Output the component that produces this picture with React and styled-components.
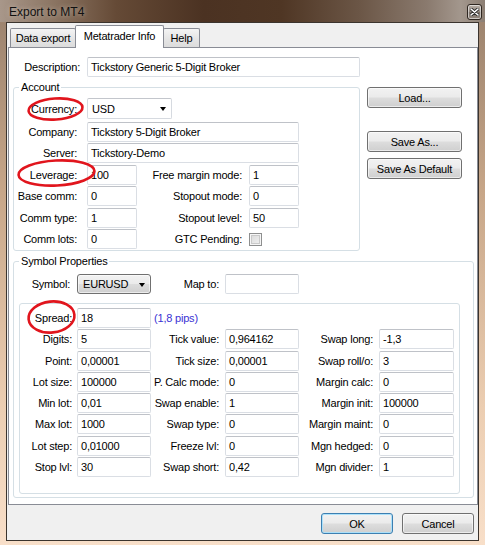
import React from "react";
import styled, { createGlobalStyle } from "styled-components";

const GlobalStyle = createGlobalStyle`
  html, body {
    margin: 0;
    padding: 0;
  }
  body {
    font-family: "Liberation Sans", Arial, sans-serif;
    font-size: 11px;
    letter-spacing: -0.2px;
    color: #000;
    background: #f6dac2;
  }
`;

const accountRows = [
  { label: "Leverage:", value: "100", side: "Free margin mode:", sideValue: "1", mark: true },
  { label: "Base comm:", value: "0", side: "Stopout mode:", sideValue: "0" },
  { label: "Comm type:", value: "1", side: "Stopout level:", sideValue: "50" },
  { label: "Comm lots:", value: "0", side: "GTC Pending:", check: true },
];

const symbolRows = [
  ["Digits:", "5", "Tick value:", "0,964162", "Swap long:", "-1,3"],
  ["Point:", "0,00001", "Tick size:", "0,00001", "Swap roll/o:", "3"],
  ["Lot size:", "100000", "P. Calc mode:", "0", "Margin calc:", "0"],
  ["Min lot:", "0,01", "Swap enable:", "1", "Margin init:", "100000"],
  ["Max lot:", "1000", "Swap type:", "0", "Margin maint:", "0"],
  ["Lot step:", "0,01000", "Freeze lvl:", "0", "Mgn hedged:", "0"],
  ["Stop lvl:", "30", "Swap short:", "0,42", "Mgn divider:", "1"],
];

const Mark = ({ left, top, width, height, rot = 0 }) => (
  <MarkSvg
    width={width}
    height={height}
    style={{ left, top, transform: `rotate(${rot}deg)` }}
    viewBox={`0 0 ${width} ${height}`}
  >
    <ellipse
      cx={width / 2}
      cy={height / 2}
      rx={width / 2 - 1.5}
      ry={height / 2 - 1.5}
      fill="none"
      stroke="#e1151d"
      strokeWidth="2.6"
    />
  </MarkSvg>
);

const App = () => {
  return (
    <>
      <GlobalStyle />
      <Window>
        <TitleBar>
          <Title>Export to MT4</Title>
          <CloseButton>
            <svg width="9" height="8" viewBox="0 0 9 8">
              <path d="M1 1 L8 7 M8 1 L1 7" stroke="#2b2b2b" strokeWidth="3.2" strokeLinecap="round" />
              <path d="M1 1 L8 7 M8 1 L1 7" stroke="#ffffff" strokeWidth="1.6" strokeLinecap="round" />
            </svg>
          </CloseButton>
        </TitleBar>

        <Client>
          <TabStrip>
            <Tab $w={66}>Data export</Tab>
            <Tab $w={89} $active>Metatrader Info</Tab>
            <Tab $w={37}>Help</Tab>
          </TabStrip>

          <Panel>
            <DescRow>
              <Label $w={74} $pad={7}>Description:</Label>
              <Input $w={273}>Tickstory Generic 5-Digit Broker</Input>
            </DescRow>

            <AccountRow>
              <Group $w={347}>
                <Legend>Account</Legend>
                <AccountGrid>
                  <Label $pad={10}>
                    Currency:
                    <Mark left={13} top={-1} width={57} height={24} rot={-4} />
                  </Label>
                  <WhiteSelect>
                    USD
                    <Arrow />
                  </WhiteSelect>
                  <Label $pad={10}>Company:</Label>
                  <Input $span={3}>Tickstory 5-Digit Broker</Input>
                  <Label $pad={10}>Server:</Label>
                  <Input $span={3}>Tickstory-Demo</Input>
                  {accountRows.map((r) => (
                    <React.Fragment key={r.label}>
                      <Label $pad={10}>
                        {r.label}
                        {r.mark && <Mark left={3} top={-6} width={79} height={28} rot={-3} />}
                      </Label>
                      <Input>{r.value}</Input>
                      <Label $pad={7}>{r.side}</Label>
                      {r.check ? (
                        <CheckCell>
                          <Checkbox />
                        </CheckCell>
                      ) : (
                        <Input>{r.sideValue}</Input>
                      )}
                    </React.Fragment>
                  ))}
                </AccountGrid>
              </Group>

              <SideButtons>
                <Button $w={95}>Load...</Button>
                <Button $w={95} $gap={23}>Save As...</Button>
                <Button $w={95} $gap={6}>Save As Default</Button>
              </SideButtons>
            </AccountRow>

            <Group $w={461} $gap={4}>
              <Legend>Symbol Properties</Legend>
              <SymbolRow>
                <Label $pad={7}>Symbol:</Label>
                <ComboButton>
                  EURUSD
                  <Arrow />
                </ComboButton>
                <Label $pad={6}>Map to:</Label>
                <Input />
              </SymbolRow>

              <InnerBox>
                <SymbolGrid>
                  <Label $pad={5}>
                    Spread:
                    <Mark left={7} top={-8} width={49} height={34} rot={-6} />
                  </Label>
                  <Input>18</Input>
                  <Note>(1,8 pips)</Note>
                  {symbolRows.map((r) => (
                    <React.Fragment key={r[0]}>
                      <Label $pad={5}>{r[0]}</Label>
                      <Input>{r[1]}</Input>
                      <Label $pad={6}>{r[2]}</Label>
                      <Input>{r[3]}</Input>
                      <Label $pad={6}>{r[4]}</Label>
                      <Input>{r[5]}</Input>
                    </React.Fragment>
                  ))}
                </SymbolGrid>
              </InnerBox>
            </Group>
          </Panel>

          <Footer>
            <Button $w={72} $default>
              OK
            </Button>
            <Button $w={72}>Cancel</Button>
          </Footer>
        </Client>
      </Window>
    </>
  );
};

export default App;

const Window = styled.div`
  width: 485px;
  height: 545px;
  box-sizing: border-box;
  display: flex;
  flex-direction: column;
  padding: 0 6px 4px 6px;
  background: linear-gradient(180deg, #98806c 0%, #c7a688 35%, #ecceb2 75%, #f8dfc9 100%);
`;

const TitleBar = styled.div`
  height: 22px;
  margin: 0 -6px;
  padding: 0 3px 0 9px;
  display: flex;
  align-items: center;
  justify-content: space-between;
  background: linear-gradient(
    90deg,
    #a8978a 0%,
    #8e7866 10%,
    #654a36 24%,
    #4b3222 42%,
    #4f3624 58%,
    #6b5646 74%,
    #8a7a6e 88%,
    #a3978d 95%,
    #8c7f74 100%
  );
`;

const Title = styled.span`
  font-size: 12px;
  letter-spacing: 0;
  color: #111;
  text-shadow: 0 0 5px rgba(220, 210, 200, 0.7);
  margin-top: 1px;
`;

const CloseButton = styled.div`
  width: 13px;
  height: 14px;
  margin-top: 2px;
  border: 1px solid #2e2620;
  border-radius: 3px;
  display: flex;
  align-items: center;
  justify-content: center;
  background: linear-gradient(180deg, #b9b0a8 0%, #8f857c 50%, #7a7068 51%, #958a80 100%);
  box-shadow: inset 0 0 0 1px rgba(255, 255, 255, 0.55);
`;

const Client = styled.div`
  flex: 1;
  display: flex;
  flex-direction: column;
  border: 1px solid #3b342e;
  background: #f0f0f0;
  padding-left: 1px;
`;

const TabStrip = styled.div`
  height: 25px;
  margin-bottom: -1px;
  padding-left: 2px;
  display: flex;
  align-items: flex-end;
  position: relative;
  z-index: 1;
`;

const Tab = styled.div`
  box-sizing: border-box;
  width: ${(p) => p.$w}px;
  height: ${(p) => (p.$active ? 23 : 19)}px;
  margin-bottom: ${(p) => (p.$active ? 0 : 1)}px;
  margin-left: -1px;
  padding-bottom: ${(p) => (p.$active ? 2 : 0)}px;
  border: 1px solid #898c95;
  border-bottom: none;
  border-radius: 2px 2px 0 0;
  display: flex;
  align-items: center;
  justify-content: center;
  background: ${(p) => (p.$active ? "#ffffff" : "linear-gradient(180deg, #f4f4f4 0%, #e6e6e6 50%, #dcdcdc 100%)")};
  position: relative;
  z-index: ${(p) => (p.$active ? 2 : 1)};

  &:first-child {
    margin-left: 0;
  }
`;

const Panel = styled.div`
  border: 1px solid #898c95;
  background: #ffffff;
  padding: 9px 3px 6px 4px;
  display: flex;
  flex-direction: column;
`;

const DescRow = styled.div`
  display: flex;
  height: 20px;
`;

const Label = styled.div`
  position: relative;
  box-sizing: border-box;
  ${(p) => (p.$w ? `width: ${p.$w}px;` : "")}
  padding-right: ${(p) => p.$pad || 0}px;
  display: flex;
  align-items: center;
  justify-content: flex-end;
  white-space: nowrap;
`;

const Input = styled.div`
  box-sizing: border-box;
  ${(p) => (p.$w ? `width: ${p.$w}px;` : "")}
  ${(p) => (p.$span ? `grid-column: span ${p.$span};` : "")}
  height: 20px;
  padding: 0 3px;
  border: 1px solid #dadee4;
  border-top-color: #bfc2c8;
  border-radius: 2px;
  background: #ffffff;
  display: flex;
  align-items: center;
  white-space: nowrap;
  overflow: hidden;
`;

const AccountRow = styled.div`
  display: flex;
  align-items: flex-start;
  margin-top: 3.5px;
`;

const Group = styled.fieldset`
  box-sizing: border-box;
  width: ${(p) => p.$w}px;
  margin: ${(p) => p.$gap || 0}px 0 0 0;
  padding: 0 0 1px 0;
  border: 1px solid #d5dfe5;
  border-radius: 3px;
  min-inline-size: 0;
`;

const Legend = styled.legend`
  margin-left: 5px;
  padding: 0 2px;
  line-height: 13px;
  font-size: 11px;
  color: #000;
`;

const AccountGrid = styled.div`
  display: grid;
  grid-template-columns: 73px 50px 112px 50px;
  grid-template-rows: 22px;
  grid-auto-rows: 20px;
  row-gap: 1.5px;
  padding-top: 4.5px;
`;

const WhiteSelect = styled.div`
  grid-column: span 3;
  box-sizing: border-box;
  width: 85px;
  height: 21px;
  padding: 0 5px 0 4px;
  border: 1px solid #d6dae0;
  border-top-color: #c3c6cc;
  border-radius: 2px;
  background: #ffffff;
  display: flex;
  align-items: center;
  justify-content: space-between;
`;

const Arrow = styled.span`
  width: 0;
  height: 0;
  border-left: 3.5px solid transparent;
  border-right: 3.5px solid transparent;
  border-top: 4px solid #000;
  margin-top: 1px;
`;

const CheckCell = styled.div`
  display: flex;
  align-items: center;
`;

const Checkbox = styled.span`
  box-sizing: border-box;
  width: 13px;
  height: 13px;
  border: 1px solid #8e8f8f;
  background: linear-gradient(135deg, #d8d8d8 0%, #f2f2f2 100%);
  box-shadow: inset 0 0 0 1px #f6f6f6, inset 0 0 0 2px #c9c9c9;
`;

const SideButtons = styled.div`
  display: flex;
  flex-direction: column;
  margin-left: 7px;
  padding-top: 6.5px;
`;

const Button = styled.div`
  box-sizing: border-box;
  width: ${(p) => p.$w}px;
  height: 21px;
  margin-top: ${(p) => p.$gap || 0}px;
  border: 1px solid ${(p) => (p.$default ? "#3c7fb1" : "#707070")};
  border-radius: 3px;
  background: linear-gradient(180deg, #f2f2f2 0%, #ebebeb 48%, #dddddd 52%, #cfcfcf 100%);
  box-shadow: inset 0 0 0 1px ${(p) => (p.$default ? "rgba(166, 224, 252, 0.9)" : "rgba(255, 255, 255, 0.6)")};
  display: flex;
  align-items: center;
  justify-content: center;
  white-space: nowrap;
`;

const SymbolRow = styled.div`
  display: grid;
  grid-template-columns: 57px 74px 74px 74px;
  grid-template-rows: 20px;
  padding: 6px 0 0 6px;
`;

const ComboButton = styled.div`
  box-sizing: border-box;
  width: 74px;
  height: 20px;
  padding: 0 5px 0 5px;
  border: 1px solid #707070;
  border-radius: 3px;
  background: linear-gradient(180deg, #f2f2f2 0%, #ebebeb 48%, #dddddd 52%, #cfcfcf 100%);
  box-shadow: inset 0 0 0 1px rgba(255, 255, 255, 0.6);
  display: flex;
  align-items: center;
  justify-content: space-between;
`;

const InnerBox = styled.div`
  align-self: flex-start;
  width: fit-content;
  margin: 9px 0 2px 5px;
  padding: 4px 5px 16px 0;
  border: 1px solid #d5dfe5;
  border-radius: 3px;
`;

const SymbolGrid = styled.div`
  display: grid;
  grid-template-columns: 57px 74px 74px 74px 80px 75px;
  grid-auto-rows: 20px;
  row-gap: 1.3px;
`;

const Note = styled.div`
  grid-column: span 4;
  display: flex;
  align-items: center;
  padding-left: 3px;
  color: #3a32d4;
`;

const MarkSvg = styled.svg`
  position: absolute;
  overflow: visible;
  pointer-events: none;
  z-index: 3;
`;

const Footer = styled.div`
  flex: 1;
  display: flex;
  justify-content: flex-end;
  align-items: flex-start;
  gap: 9px;
  padding: 8px 4px 0 0;
`;
